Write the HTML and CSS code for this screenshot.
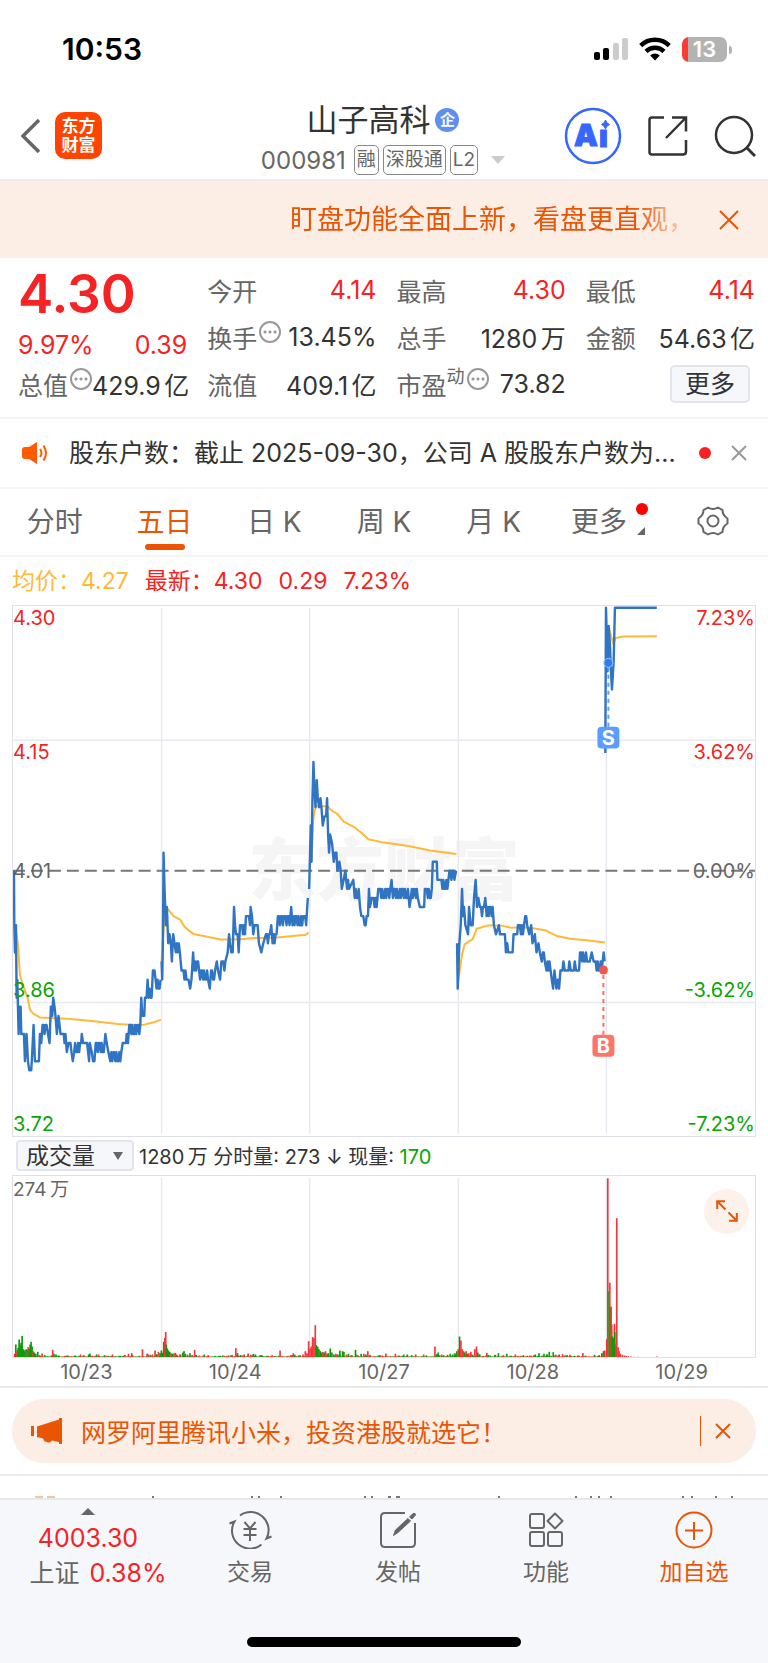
FILE: index.html
```html
<!DOCTYPE html>
<html lang="zh-CN">
<head>
  <meta charset="UTF-8">
  <meta name="viewport" content="width=device-width, initial-scale=1">
  <title>山子高科 000981</title>
  <link rel="stylesheet" href="styles.css">
</head>
<body>

  <div class="status-bar">
    <span class="clock">10:53</span>
    <div class="status-icons">
      <svg width="34" height="24" viewBox="0 0 34 24">
        <rect x="0" y="15" width="6" height="8" rx="2" fill="#000"/>
        <rect x="9" y="11" width="6" height="12" rx="2" fill="#000"/>
        <rect x="19" y="6" width="6" height="17" rx="2" fill="#ccc"/>
        <rect x="28" y="1" width="6" height="22" rx="2" fill="#ccc"/>
      </svg>
      <svg width="32" height="24" viewBox="0 0 32 24">
        <g fill="none" stroke="#000" stroke-width="4.4">
          <path d="M1.700 8.600a20.500 20.500 0 0 1 28.600 0"/>
          <path d="M7 14.300a13 13 0 0 1 18 0"/>
        </g>
        <path d="M11.200 18.500a7 7 0 0 1 9.600 0L16 23.600z"/>
      </svg>
      <div class="battery"><span>13</span></div>
    </div>
  </div>

  <header class="header">
    <div class="header-left">
      <button class="icon-btn" aria-label="返回">
        <svg width="20" height="36" viewBox="0 0 20 36"><path d="M18 2 2 18l16 16" fill="none" stroke="#666" stroke-width="3.500"/></svg>
      </button>
      <div class="logo">东方<br>财富</div>
    </div>
    <div class="stock">
      <h1>山子高科 <span class="ent">企</span></h1>
      <div class="stock-sub">
        <span class="code">000981</span>
        <span class="tag">融</span>
        <span class="tag">深股通</span>
        <span class="tag">L2</span>
        <svg class="caret" width="14" height="8" viewBox="0 0 14 8"><path d="M0 0h14L7 8z" fill="#ccc"/></svg>
      </div>
    </div>
    <div class="header-right">
      <button class="icon-btn" aria-label="AI 助手">
        <svg width="58" height="58" viewBox="0 0 58 58">
          <circle cx="29" cy="29" r="27" fill="none" stroke="#3667fc" stroke-width="2.500"/>
          <text class="ai" x="10" y="39">A</text>
          <text class="ai" x="35" y="40">ı</text>
          <path d="M41.500 13q1 3.500 4 4.500-3 1-4 4.500-1-3.500-4-4.500 3-1 4-4.500z" fill="#3667fc" stroke="#3667fc"/>
        </svg>
      </button>
      <button class="icon-btn" aria-label="分享">
        <svg width="40" height="40" viewBox="0 0 40 40">
          <path d="M16 1.500H4Q1.500 1.500 1.500 4v32q0 2.500 2.500 2.500h31q3 0 3-3V24M24 1.500h14v14M38 1.500 18 22" fill="none" stroke="#333" stroke-width="2.500"/>
        </svg>
      </button>
      <button class="icon-btn" aria-label="搜索">
        <svg width="42" height="42" viewBox="0 0 42 42">
          <circle cx="20" cy="20" r="18" fill="none" stroke="#333" stroke-width="2.500"/>
          <path d="m32 32 9 9" stroke="#333" stroke-width="3"/>
        </svg>
      </button>
    </div>
  </header>

  <div class="banner">
    <p>盯盘功能全面上新，看盘更直观，</p>
    <button class="icon-btn" aria-label="关闭">
      <svg width="20" height="20" viewBox="0 0 20 20"><path d="m1 1 18 18M19 1 1 19" stroke="#ea5504" stroke-width="2"/></svg>
    </button>
  </div>

  <section class="quote">
    <div class="last">
      <strong>4.30</strong>
      <div class="change"><span>9.97%</span><span>0.39</span></div>
    </div>
    <div class="cell"><span class="name">今开</span><span class="up">4.14</span></div>
    <div class="cell"><span class="name">最高</span><span class="up">4.30</span></div>
    <div class="cell"><span class="name">最低</span><span class="up">4.14</span></div>
    <div class="cell"><span class="name">换手<i class="info"></i></span><span>13.45%</span></div>
    <div class="cell"><span class="name">总手</span><span>1280<small>&nbsp;</small>万</span></div>
    <div class="cell"><span class="name">金额</span><span>54.63<small>&nbsp;</small>亿</span></div>
    <div class="cell"><span class="name">总值<i class="info"></i></span><span>429.9<small>&nbsp;</small>亿</span></div>
    <div class="cell"><span class="name">流值</span><span>409.1<small>&nbsp;</small>亿</span></div>
    <div class="cell"><span class="name">市盈<sup>动</sup><i class="info"></i></span><span>73.82</span></div>
    <div class="cell more"><button>更多</button></div>
  </section>

  <div class="notice">
    <svg width="26" height="22" viewBox="0 0 26 22">
      <path d="M0 8q0-3 3-3h4l8-5v22l-8-5H3q-3 0-3-3z" fill="#ff5a00"/>
      <path d="M18 7q3 4 0 8M21.500 3.500q5 7.500 0 15" fill="none" stroke="#ff5a00" stroke-width="2"/>
    </svg>
    <p>股东户数：截止 2025-09-30，公司 A 股股东户数为...</p>
    <i class="dot"></i>
    <button class="icon-btn" aria-label="关闭公告">
      <svg width="16" height="16" viewBox="0 0 16 16"><path d="m1 1 14 14M15 1 1 15" stroke="#999" stroke-width="2"/></svg>
    </button>
  </div>

  <nav class="tabs">
    <button>分时</button>
    <button class="active">五日</button>
    <button>日 K</button>
    <button>周 K</button>
    <button>月 K</button>
    <button class="tab-more">更多</button>
    <button class="tab-set" aria-label="设置">
      <svg width="32" height="30" viewBox="0 0 32 30">
        <path d="M11 1.500q5 3 10 0l4.500 2.600q0 5.500 5 8.400v5q-5 2.900-5 8.400L21 28.500q-5-3-10 0l-4.500-2.600q0-5.500-5-8.400v-5q5-2.900 5-8.400z" fill="none" stroke="#666" stroke-width="2" stroke-linejoin="round"/>
        <circle cx="16" cy="15" r="5.500" fill="none" stroke="#666" stroke-width="2"/>
      </svg>
    </button>
  </nav>

  <div class="legend">
    <span class="avg">均价：4.27</span>
    <span>最新：4.30</span>
    <span>0.29</span>
    <span>7.23%</span>
  </div>

  <main class="charts">
    <div class="chart">
      <svg viewBox="0 0 744 531">
        <text class="watermark" x="372" y="290">东方财富</text>
        <g class="grid">
          <path d="M0 134.500h744M0 397.500h744"/>
          <path d="M149 2v527M297.500 2v527M446.500 2v527M595 2v527"/>
        </g>
        <path class="base" d="M0 265.500h744"/>
        <g transform="matrix(.3333 0 0 .3444 -11.700 -5.200)">
          <g id="avgLines"></g>
          <g id="priceLines"></g>
        </g>
        <!-- trade markers -->
        <g>
          <path d="M597 61v62" stroke="#5b9dff" stroke-width="2" stroke-dasharray="4 4"/>
          <circle cx="597" cy="57" r="4.500" fill="#2f7df0" stroke="#9cc3ff"/>
          <rect class="sell" x="586" y="121" width="22" height="22" rx="4"/>
          <text class="mark" x="597" y="139">S</text>
          <path d="M592 370v60" stroke="#ff6f61" stroke-width="2" stroke-dasharray="4 4"/>
          <circle cx="592" cy="365" r="4.500" fill="#f2554a"/>
          <rect class="buy" x="581" y="430" width="22" height="22" rx="4"/>
          <text class="mark" x="592" y="448">B</text>
        </g>
      </svg>
      <div class="scale">
        <span class="up">4.30</span><span class="up">4.15</span>
        <span class="mid">4.01</span>
        <span class="down">3.86</span><span class="down">3.72</span>
      </div>
      <div class="scale right">
        <span class="up">7.23%</span><span class="up">3.62%</span>
        <span class="mid">0.00%</span>
        <span class="down">-3.62%</span><span class="down">-7.23%</span>
      </div>
    </div>

    <div class="volume-head">
      <div class="picker">
        <select aria-label="指标">
          <option>成交量</option>
          <option>MACD</option>
          <option>KDJ</option>
        </select>
      </div>
      <p>1280<small>&nbsp;</small>万 分时量: 273 ↓ 现量: <span class="down">170</span></p>
    </div>

    <div class="chart volume">
      <svg viewBox="0 0 744 182">
        <g class="grid"><path d="M149 2v180M297.500 2v180M446.500 2v180M595 2v180"/></g>
        <g id="volBars" transform="matrix(.3333 0 0 .3333 -11.700 -45)"></g>
      </svg>
      <span class="peak">274<small>&nbsp;</small>万</span>
      <button class="expand" aria-label="全屏">
        <svg width="22" height="22" viewBox="0 0 22 22"><path d="M9 1.200H1.200V9M1.500 1.500l8 8M13 20.800h7.800V13M20.500 20.500l-8-8" fill="none" stroke="#ea5504" stroke-width="2"/></svg>
      </button>
    </div>
    <div class="dates">
      <span>10/23</span><span>10/24</span><span>10/27</span><span>10/28</span><span>10/29</span>
    </div>
  </main>

  <aside class="promo">
    <div class="pill">
      <svg width="32" height="26" viewBox="0 0 32 26">
        <path d="M0 8h3v10H0zM6 8.500 28 1.500V0h3v26h-3v-2l-7-1.500q-2 3-5 1.500-3 0-4-3.500l-6-1.500z" fill="#ea5504"/>
      </svg>
      <a href="#">网罗阿里腾讯小米，投资港股就选它！</a>
      <button class="icon-btn" aria-label="关闭广告">
        <svg width="16" height="16" viewBox="0 0 16 16"><path d="m1 1 14 14M15 1 1 15" stroke="#ea5504" stroke-width="2"/></svg>
      </button>
    </div>
  </aside>

  <div class="next-section">
    <svg viewBox="0 0 768 2">
      <path d="M35 1h8M47 1h8" stroke="#f7c4a6" stroke-width="2"/>
      <path d="M152 1h2M251 1h2M258 1h2M280 1h2M364 1h2M371 1h2M388 1h3M396 1h4M498 1h2M575 1h2M590 1h2M598 1h2M610 1h2M682 1h2M691 1h2M715 1h2M731 1h2" stroke="#777" stroke-width="2"/>
    </svg>
  </div>

  <footer class="bottom">
    <nav class="bottom-nav">
      <a class="index" href="#">
        <svg width="14" height="7" viewBox="0 0 14 7"><path d="M7 0 14 7H0z" fill="#666"/></svg>
        <span class="up">4003.30</span>
        <span class="index-name">上证 <b>0.38%</b></span>
      </a>
      <a href="#">
        <svg width="44" height="38" viewBox="0 0 44 38">
          <g fill="none" stroke="#666" stroke-width="2">
            <path d="M12 4.500A18 18 0 0 1 38.500 27.500l5-2M33.500 33.500A18 18 0 0 1 6.500 10.500l-5 2"/>
            <path d="m16.500 11 5.500 6.500 5.500-6.500M22 17v13M15.500 18h13M15.500 24h13"/>
          </g>
        </svg>
        <span>交易</span>
      </a>
      <a href="#">
        <svg width="38" height="38" viewBox="0 0 38 38">
          <path d="M26 2H6Q2 2 2 6v26q0 4 4 4h26q4 0 4-4V12" fill="none" stroke="#666" stroke-width="2"/>
          <path d="M14.500 24.500 16.500 19 29 7.500l2.500 2.500L19 21.500zM30.500 6 34 2.500q2.500-1 2.500 1.500L33 8z" fill="#666" stroke="#666"/>
        </svg>
        <span>发帖</span>
      </a>
      <a href="#">
        <svg width="36" height="38" viewBox="0 0 36 38">
          <g fill="none" stroke="#666" stroke-width="2">
            <rect x="2" y="3" width="14" height="14" rx="2"/>
            <rect x="2" y="21" width="14" height="14" rx="2"/>
            <rect x="20" y="21" width="14" height="14" rx="2"/>
            <path d="M27 2.500 34.500 10 27 17.500 19.500 10z" stroke-linejoin="round"/>
          </g>
        </svg>
        <span>功能</span>
      </a>
      <a class="add" href="#">
        <svg width="38" height="38" viewBox="0 0 38 38">
          <path d="M19 11v18M10 19.500h18" stroke="#ea5504" stroke-width="2"/>
          <circle cx="19" cy="19" r="17.500" fill="none" stroke="#ea5504" stroke-width="2"/>
        </svg>
        <span>加自选</span>
      </a>
    </nav>
    <div class="home-bar"></div>
  </footer>

  <script src="chart.js"></script>
</body>
</html>
```

FILE: styles.css
```css
* {
  box-sizing: border-box;
}
body {
  margin: 0;
  background: #fff;
  color: #333;
  font-family: Inter, "Noto Sans CJK SC", sans-serif;
  font-size: 25px;
}
h1, p {
  margin: 0;
  font-weight: normal;
}
svg {
  display: block;
  flex: none;
}
button, select {
  font: inherit;
  color: inherit;
  background: none;
  border: 0;
  padding: 0;
  margin: 0;
  cursor: pointer;
}
a {
  color: inherit;
  text-decoration: none;
}
i {
  font-style: normal;
}
small {
  font-size: 12px;
}
.icon-btn {
  display: block;
  flex: none;
}
.up {
  color: #f52323;
}
.down {
  color: #09a509;
}

/* status bar */
.status-bar {
  display: flex;
  justify-content: space-between;
  align-items: center;
  height: 92px;
  padding: 6px 36px 0 62px;
  color: #000;
}
.clock {
  font-size: 30px;
  font-weight: 600;
}
.status-icons {
  display: flex;
  align-items: center;
  gap: 11px;
}
.battery {
  position: relative;
  width: 45px;
  height: 25px;
  margin-right: 5px;
  border-radius: 7px;
  background: linear-gradient(90deg, #ff3b30 6px, #b3b3b3 6px);
  color: #fff;
  font-size: 22px;
  font-weight: 600;
  line-height: 25px;
  text-align: center;
}
.battery::after {
  content: "";
  position: absolute;
  left: 47px;
  top: 9px;
  width: 3px;
  height: 8px;
  border-radius: 0 4px 4px 0;
  background: #b3b3b3;
}

/* header */
.header {
  display: grid;
  grid-template-columns: 1fr auto 1fr;
  align-items: center;
  height: 89px;
  padding: 0 14px 0 12px;
  border-bottom: 2px solid #ececee;
}
.header-left, .header-right {
  display: flex;
  align-items: center;
}
.header-left {
  gap: 14px;
  padding-left: 9px;
}
.header-right {
  justify-content: flex-end;
  gap: 26px;
  margin-right: -2px;
}
.logo {
  width: 47px;
  height: 47px;
  padding-top: 5px;
  border-radius: 10px;
  background: #ff4400;
  color: #fff;
  font-size: 17px;
  font-weight: 700;
  line-height: 19px;
  text-align: center;
}
.stock {
  padding-top: 4px;
}
.stock h1 {
  display: flex;
  justify-content: center;
  align-items: center;
  gap: 5px;
  font-size: 31px;
  line-height: 40px;
}
.ent {
  width: 24px;
  height: 24px;
  border-radius: 50%;
  background: #6090ee;
  color: #fff;
  font-size: 15px;
  font-weight: 700;
  line-height: 24px;
  text-align: center;
}
.stock-sub {
  display: flex;
  align-items: center;
  gap: 4px;
  margin-top: 5px;
  color: #666;
}
.code {
  margin-right: 4px;
  font-size: 24px;
}
.tag {
  padding: 0 2px;
  border: 1px solid #888;
  border-radius: 5px;
  font-size: 19px;
  line-height: 28px;
}
.caret {
  margin-left: 9px;
}
.ai {
  fill: #3667fc;
  stroke: #3667fc;
  font-size: 30px;
  font-weight: 900;
}

/* scrolling banner */
.banner {
  display: flex;
  align-items: center;
  justify-content: space-between;
  height: 77px;
  padding: 0 29px;
  background: #fdeee5;
}
.banner p {
  flex: 1;
  margin-right: 24px;
  padding-left: 261px;
  overflow: hidden;
  color: #ea5504;
  font-size: 27px;
  line-height: 40px;
  white-space: nowrap;
  mask-image: linear-gradient(90deg, #000 calc(100% - 60px), transparent);
}

/* quote numbers */
.quote {
  display: grid;
  grid-template-columns: repeat(4, minmax(0, 1fr));
  grid-template-rows: repeat(3, 47px);
  column-gap: 20px;
  padding: 8px 13px 10px 18px;
  border-bottom: 2px solid #f4f5f7;
}
.last {
  grid-row: span 2;
  color: #f52323;
}
.last strong {
  display: block;
  font-size: 53px;
  font-weight: 600;
  line-height: 56px;
}
.change {
  display: flex;
  justify-content: space-between;
  line-height: 46px;
}
.cell {
  display: flex;
  justify-content: space-between;
  align-items: center;
  white-space: nowrap;
}
.name {
  display: flex;
  align-items: center;
  color: #666;
}
.name sup {
  margin-bottom: 14px;
  font-size: 18px;
  line-height: 20px;
  vertical-align: baseline;
}
.info {
  width: 22px;
  height: 22px;
  margin: 0 0 10px 2px;
  border: 2px solid #999;
  border-radius: 50%;
  background:
    radial-gradient(circle at 4px 9px, #999 1px, transparent 2px),
    radial-gradient(circle at 9px 9px, #999 1px, transparent 2px),
    radial-gradient(circle at 14px 9px, #999 1px, transparent 2px);
}
.more {
  justify-content: flex-end;
  padding-right: 5px;
}
.more button {
  width: 80px;
  height: 38px;
  border: 2px solid #e3e5ea;
  border-radius: 5px;
  background: #f6f7fa;
  line-height: 34px;
}

/* notice */
.notice {
  display: flex;
  align-items: center;
  height: 70px;
  padding: 0 21px 0 22px;
  border-bottom: 2px solid #f4f5f7;
}
.notice p {
  flex: 1;
  padding-left: 21px;
  overflow: hidden;
  line-height: 36px;
  white-space: nowrap;
}
.dot {
  width: 12px;
  height: 12px;
  margin-right: 20px;
  border-radius: 50%;
  background: #f52323;
}

/* period tabs */
.tabs {
  display: grid;
  grid-template-columns: repeat(7, 1fr);
  justify-items: center;
  height: 68px;
  border-bottom: 2px solid #f4f5f7;
  color: #666;
  font-size: 28px;
}
.tabs button {
  position: relative;
  padding-bottom: 5px;
}
.tabs .tab-set {
  padding-bottom: 3px;
}
.tabs .active {
  color: #ea5504;
}
.active::after {
  content: "";
  position: absolute;
  left: 50%;
  bottom: 5px;
  width: 40px;
  height: 6px;
  margin-left: -20px;
  border-radius: 3px;
  background: #ea5504;
}
.tabs .tab-more {
  padding-right: 9px;
}
.tab-more::before {
  content: "";
  position: absolute;
  right: -12px;
  top: 14px;
  width: 12px;
  height: 12px;
  border-radius: 50%;
  background: #f00;
}
.tab-more::after {
  content: "";
  position: absolute;
  right: -9px;
  bottom: 20px;
  border: 4px solid;
  border-color: transparent #666 #666 transparent;
}

/* charts */
.legend {
  display: flex;
  gap: 16px;
  padding: 6px 12px;
  color: #f52323;
  font-size: 23px;
  line-height: 36px;
}
.avg {
  color: #ffb938;
}
.charts {
  padding: 0 12px;
  border-bottom: 2px solid #e6e8ec;
}
.chart {
  display: grid;
  border: 1px solid #dde0e8;
}
.chart > * {
  grid-area: 1 / 1;
}
.chart svg {
  width: 100%;
}
.grid {
  stroke: #e6e9f0;
  stroke-width: 1.5px;
}
.base {
  stroke: #777;
  stroke-width: 2px;
  stroke-dasharray: 12 6;
}
.price-line, .avg-line {
  fill: none;
  stroke: #3074c4;
  stroke-width: 2.4px;
  stroke-linejoin: round;
  vector-effect: non-scaling-stroke;
}
.avg-line {
  stroke: #ffb938;
  stroke-width: 2px;
}
.watermark {
  fill: #f5f5f5;
  font-size: 68px;
  font-weight: 900;
  text-anchor: middle;
}
.mark {
  fill: #fff;
  font-size: 20px;
  font-weight: 700;
  text-anchor: middle;
}
.sell {
  fill: #5b9dff;
}
.buy {
  fill: #ff7468;
}
.scale {
  display: grid;
  grid-template-rows: 134fr 131fr 131fr 134fr;
  justify-self: start;
  font-size: 20px;
  line-height: 24px;
}
.scale .down {
  align-self: end;
}
.scale .up {
  align-self: start;
}
.scale span {
  grid-column: 1;
}
.scale .mid {
  grid-row: 2 / 4;
  align-self: center;
  color: #666;
}
.scale span:nth-child(2) {
  grid-row: 2;
}
.scale span:nth-child(4) {
  grid-row: 3;
}
.right {
  justify-self: end;
  text-align: right;
}
.volume-head {
  display: flex;
  align-items: center;
  gap: 5px;
  height: 38px;
  padding-left: 4px;
  font-size: 20px;
}
.picker {
  position: relative;
}
.picker::after {
  content: "";
  position: absolute;
  right: 11px;
  top: 12px;
  border: 5px solid transparent;
  border-top: 8px solid #666;
  border-bottom: 0;
  pointer-events: none;
}
.picker select {
  width: 118px;
  height: 31px;
  padding-left: 8px;
  border: 2px solid #e3e5ea;
  border-radius: 4px;
  background: #f6f7fa;
  appearance: none;
  font-size: 23px;
  line-height: 26px;
}
.volume svg {
  min-width: 0;
}
.peak {
  justify-self: start;
  padding: 1px 0;
  color: #666;
  font-size: 19px;
  line-height: 26px;
}
.expand {
  display: grid;
  place-items: center;
  justify-self: end;
  width: 45px;
  height: 45px;
  margin: 13px 6px 0 0;
  border-radius: 50%;
  background: #fdf1eb;
}
.expand svg {
  width: 22px;
}
.dates {
  display: grid;
  grid-template-columns: repeat(5, 1fr);
  color: #666;
  font-size: 20px;
  line-height: 28px;
  text-align: center;
}

/* promo */
.promo {
  padding: 11px 12px;
  border-bottom: 2px solid #ececee;
}
.pill {
  display: flex;
  align-items: center;
  height: 64px;
  padding: 0 25px 0 19px;
  border-radius: 32px;
  background: #fdeee5;
  color: #ea5504;
}
.pill a {
  flex: 1;
  padding-left: 18px;
}
.pill .icon-btn {
  padding: 7px 0 7px 14px;
  border-left: 1px solid #ea5504;
}

.next-section {
  height: 22px;
  padding-top: 20px;
}

/* bottom bar */
.bottom {
  height: 165px;
  padding-top: 11px;
  border-top: 2px solid #e6e8ec;
  background: #f6f7fa;
}
.bottom-nav {
  display: grid;
  grid-template-columns: 176px repeat(4, 1fr);
  color: #666;
  font-size: 23px;
}
.bottom-nav a {
  display: flex;
  flex-direction: column;
  align-items: center;
  gap: 7px;
  line-height: 32px;
}
.bottom-nav .index {
  gap: 0;
  margin-top: -3px;
  font-size: 25px;
  line-height: 35px;
}
.index .up {
  margin-top: 6px;
}
.index-name {
  display: flex;
  gap: 10px;
  padding-left: 20px;
}
.index b {
  color: #f52323;
  font-weight: 400;
}
.bottom-nav .add {
  color: #ea5504;
}
.home-bar {
  width: 274px;
  height: 10px;
  margin: 46px auto 0;
  border-radius: 5px;
  background: #000;
}
```

FILE: chart.js
```javascript
const NS = 'http://www.w3.org/2000/svg';

// price points: [x, cents below previous close]
// a third value means "keep bouncing between the two levels until x"
const prices = [
  [[38,0],[39,6],[41,9],[44,6],[46,14],[48,12],[52,18],[55,15],[58,15],[60,18],[68,18],[71,21],[76,18],[80,21],[84,22],[90,22],[93,20],[97,17],[101,21],[113,21],[116,18],[120,19],[124,17],[138,17,18],[145,19],[149,15],[153,16],[156,14],[160,15],[163,16],[167,18],[172,16],[180,17,18],[188,18],[190,19],[193,18],[197,20],[202,19],[213,19,20],[215,21],[219,20],[240,19,20],[242,18],[246,19],[258,19],[261,20],[264,21],[266,19],[272,20],[276,21],[280,21],[284,19],[308,19,20],[313,18],[317,19],[322,20],[328,21],[363,20,21],[365,19],[375,19],[377,18],[381,19],[385,17],[415,17,18],[418,17],[421,14],[424,16],[430,16],[432,14],[437,14],[440,12],[443,14],[453,13,14],[456,11],[461,11],[464,12],[467,13],[481,12,13]],
  [[482,10],[484,12],[486,8],[488,-2],[491,2],[495,6],[498,4],[502,8],[506,7],[510,8],[513,10],[517,7],[521,8],[525,9],[538,8,9],[542,11],[560,11,12],[563,12],[568,13],[572,12],[577,9],[580,11],[592,10,11],[622,11,12],[627,13],[631,11],[644,11,12],[648,10],[652,11],[658,12],[662,10],[676,10,11],[681,9],[685,7],[688,8],[692,9],[696,9],[700,4],[703,6],[706,7],[711,7],[714,9],[718,6],[733,6,7],[736,5],[745,5],[748,6],[750,4],[754,5],[758,7],[762,6],[771,6],[775,8],[782,9],[788,8],[796,7],[808,7,8],[812,6],[816,8],[828,7,8],[832,5],[852,5,6],[868,5,6],[872,4],[876,6],[900,5,6],[902,5],[905,6],[908,5],[914,5],[917,6],[922,3]],
  [[926,2],[931,-5],[933,-1],[936,-8],[939,-12],[942,-9],[945,-7],[949,-10],[952,-8],[956,-7],[960,-8],[963,-7],[967,-5],[972,-6],[977,-6],[980,-8],[983,-4],[986,-2],[989,-4],[995,-3],[1000,-1],[1004,-2],[1008,-2],[1011,0],[1017,-1],[1021,0],[1024,2],[1030,1],[1035,0],[1040,2],[1048,1,2],[1059,1],[1063,3],[1077,2,3],[1079,4],[1083,5],[1089,5],[1093,6],[1096,6],[1099,5],[1103,5],[1106,2],[1109,4],[1114,3],[1130,3,4],[1134,2],[1170,2,3],[1174,1],[1178,3],[1224,2,3],[1228,4],[1232,3],[1254,2,3],[1259,4],[1272,4],[1274,2],[1296,2,3],[1298,-1],[1310,-1],[1312,1],[1321,1],[1344,1,2],[1348,0],[1364,0,1],[1368,0]],
  [[1371,8],[1373,13],[1378,8],[1382,6],[1386,2],[1389,5],[1392,4],[1396,6],[1404,7],[1407,4],[1412,6],[1418,6],[1422,3],[1427,1],[1431,4],[1435,3],[1440,4],[1452,4,5],[1456,3],[1460,5],[1478,4,5],[1482,6],[1488,7],[1497,6],[1500,7],[1515,7],[1518,9],[1522,8],[1525,9],[1538,9],[1541,7],[1552,7],[1554,6],[1570,6,7],[1576,5],[1584,5,6],[1588,7],[1594,6],[1598,8],[1605,7],[1610,9],[1616,8],[1620,9],[1626,10],[1636,9,10],[1640,11],[1650,10,11],[1656,12],[1660,13],[1664,11],[1670,13],[1674,12],[1678,13],[1682,11],[1688,11],[1691,10],[1695,11],[1706,11],[1709,10],[1713,11],[1722,11],[1725,10],[1729,11],[1738,11],[1741,9],[1764,9,10],[1770,10],[1776,9],[1782,10],[1808,10,11],[1812,9],[1815,10]],
  [[1817,-13],[1819,-29],[1822,-25],[1824,-22],[1827,-27],[1831,-25],[1834,-22],[1837,-20],[1842,-23],[1846,-29],[1972,-29]]
];

const averages = [
  '44,960 50,1000 56,1090 66,1120 80,1160 86,1190 96,1202 116,1213 200,1217 280,1224 350,1232 400,1235 430,1234 455,1228 480,1220',
  '482,1050 485,1000 490,940 492,895 500,896 518,918 538,928 552,950 578,970 620,978 660,986 720,985 760,982 830,980 900,974 915,973 924,966',
  '933,760 938,640 942,612 948,598 982,598 990,608 1010,620 1030,643 1060,658 1084,676 1104,694 1152,704 1200,710 1240,717 1290,727 1369,737',
  '1374,1110 1380,1070 1386,1030 1394,1000 1418,985 1430,955 1465,945 1500,945 1530,951 1590,952 1636,959 1672,976 1710,984 1760,988 1816,995',
  '1827,75 1836,108 1841,125 1848,108 1872,104 1972,103'
];

function add(parent, tag, attrs) {
  const el = document.createElementNS(NS, tag);
  for (const key in attrs) el.setAttribute(key, attrs[key]);
  document.getElementById(parent).appendChild(el);
}

function toPoints(day) {
  const out = [];
  let last = day[0][0];
  const push = (x, cents) => out.push(x + ',' + (786 + 26.4 * cents).toFixed(1));
  day.forEach(([x, a, b]) => {
    if (b === undefined) {
      push(x, a);
    } else {
      let high = true;
      for (let i = last + 3; i <= x; i += 3) {
        push(i, high ? a : b);
        if (i % 4 !== 1) high = !high;
      }
    }
    last = x;
  });
  return out.join(' ');
}

averages.forEach(points => add('avgLines', 'polyline', { class: 'avg-line', points }));
prices.forEach(day => add('priceLines', 'polyline', { class: 'price-line', points: toPoints(day) }));

// volume bars: [x, height], negative height = falling minute
const RED = '#f63538';
const GREEN = '#0a9a0a';

function bar(x, h) {
  add('volBars', 'rect', {
    x: x, y: 682 - Math.abs(h), width: 5, height: Math.abs(h), fill: h < 0 ? GREEN : RED
  });
}

// quiet minutes along the bottom
for (let x = 40; x < 1815; x += 4) {
  const n = Math.abs(Math.sin(x * 12.9898) * 43758.5453) % 1;
  bar(x, (n < 0.5 ? -1 : 1) * (4 + Math.floor(n * 10) % 4 * (x % 3)));
}

const volumes = [
  [38,12],[41,-40],[45,22],[48,-30],[51,-55],[54,-38],[57,-45],[60,-66],[63,-26],[66,-20],[69,-24],[72,26],[75,-24],[78,32],[81,-26],[84,-40],[87,-48],[90,-34],[93,20],[97,-16],[101,-12],[107,-18],[112,8],[120,13],[128,-8],[152,24],[156,-12],[162,-10],[170,-7],[193,-6],[218,-6],[246,8],[264,-13],[290,10],[314,6],[369,9],[380,12],[390,14],[422,26],[436,13],[446,-9],[460,22],[465,-11],[470,18],[475,-14],[479,-22],[483,-15],
  [486,-48],[489,60],[492,78],[494,-40],[497,-28],[500,-22],[504,-18],[508,14],[512,-12],[517,14],[521,15],[526,-8],[535,10],[543,-16],[547,-20],[551,-12],[558,10],[565,-14],[572,8],[579,24],[584,-8],[620,8],[656,-6],[681,7],[692,9],[703,29],[708,-14],[718,-8],[740,13],[748,9],[756,-12],[762,-10],[781,-8],[820,-5],[836,22],[868,8],[876,14],[880,-9],[905,10],[912,20],[917,14],[922,50],[926,28],[930,34],
  [934,62],[938,60],[942,98],[945,-38],[949,-34],[953,-26],[957,-20],[961,-16],[965,18],[969,-16],[973,20],[977,12],[981,-14],[987,-28],[992,-16],[998,-10],[1004,12],[1010,-10],[1016,-22],[1024,-20],[1028,-18],[1036,10],[1042,-12],[1050,8],[1063,-24],[1070,8],[1080,-12],[1088,12],[1094,-10],[1100,20],[1106,9],[1138,6],[1154,13],[1183,12],[1219,-10],[1232,-8],[1302,34],[1308,-12],[1312,-16],[1322,10],[1340,-9],[1348,-12],[1356,-10],[1362,-14],[1368,-20],
  [1372,26],[1376,-64],[1380,52],[1384,26],[1388,20],[1392,-16],[1396,20],[1400,-12],[1404,14],[1410,18],[1416,-9],[1422,26],[1427,34],[1431,-16],[1436,-10],[1458,15],[1462,-9],[1482,-9],[1493,-14],[1518,-12],[1544,10],[1561,6],[1600,-8],[1615,-14],[1630,-12],[1638,-10],[1646,-18],[1658,-17],[1666,9],[1674,8],[1686,11],[1694,8],[1708,9],[1722,-6],[1747,14],[1754,-6],[1782,-9],[1796,-8],[1804,-14],[1809,-20],[1813,22],
  [1819,56],[1822,540],[1826,-200],[1828,226],[1830,-150],[1832,154],[1834,100],[1836,-64],[1839,-60],[1842,102],[1843,-78],[1846,40],[1849,420],[1853,32],[1856,20],[1860,12],[1866,9],[1872,7],[1878,6],[1884,5],[1892,4],[1900,3],[1912,3],[1924,2],[1936,2],[1952,2],[1970,4]
];
volumes.forEach(([x, h]) => bar(x, h));
```
